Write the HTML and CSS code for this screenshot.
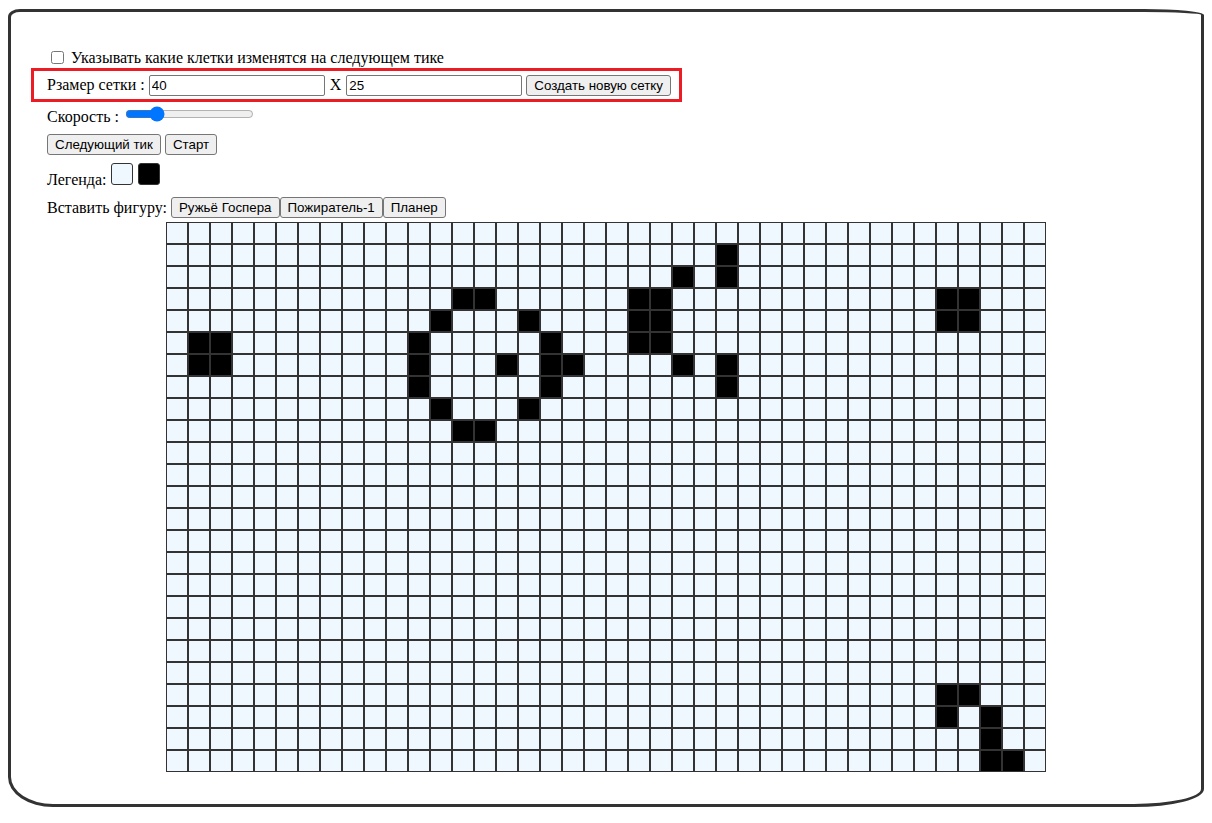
FILE: index.html
```html
<!DOCTYPE html>
<html lang="ru">
<head>
<meta charset="utf-8">
<title>Жизнь</title>
<link rel="stylesheet" href="styles.css">
</head>
<body>
<div class="board">
  <label class="row row-check">
    <input type="checkbox" class="check">
    <span>Указывать какие клетки изменятся на следующем тике</span>
  </label>
  <div class="row size-box">
    <span>Рзамер сетки :</span>
    <input type="text" class="num" value="40">
    <span class="times">X</span>
    <input type="text" class="num" value="25">
    <button class="btn">Создать новую сетку</button>
  </div>
  <div class="row row-speed">
    <span>Скорость :</span>
    <input type="range" class="speed" min="100" max="2000" value="500">
  </div>
  <div class="row row-buttons">
    <button class="btn">Следующий тик</button>
    <button class="btn">Старт</button>
  </div>
  <div class="row row-legend">
    <span class="legend-label">Легенда:</span>
    <span class="swatch"></span>
    <span class="swatch swatch-on"></span>
  </div>
  <div class="row row-insert">
    <span>Вставить фигуру:</span>
    <span class="figs">
      <button class="btn">Ружьё Госпера</button><button class="btn">Пожиратель-1</button><button class="btn">Планер</button>
    </span>
  </div>
  <table class="grid" id="grid"><tbody></tbody></table>
</div>
<script src="script.js"></script>
</body>
</html>
```
FILE: styles.css
```css
html {
  margin: 0;
  padding: 0;
}
body {
  margin: 8px;
  font-family: "Liberation Serif", "Times New Roman", serif;
  font-size: 16px;
  color: #000;
  background: #fff;
}
.board {
  margin-top: 1px;
  height: 798px;
  box-sizing: border-box;
  border: 3px solid #333;
  border-radius: 12px 60px 70px 45px / 8px 6px 18px 30px;
  padding: 36px 36px 0;
}
.row {
  display: flex;
  align-items: center;
  gap: 4px;
}
.row-check {
  height: 18px;
  gap: 0;
  padding-top: 1px;
}
.check {
  width: 13px;
  height: 13px;
  margin: 2px 7px 3px 4px;
}
.size-box {
  margin: 1px 0 0 -16px;
  width: 651px;
  height: 34px;
  box-sizing: border-box;
  border: 3px solid #ec1c24;
  padding: 0 8px 0 13px;
}
.times {
  margin: 0 1px;
}
.num {
  width: 176px;
  height: 21px;
  box-sizing: border-box;
  margin: 0;
  padding: 1px 2px;
  border: 1px solid #767676;
  border-radius: 2px;
  background: #fff;
  font: 13.333px "Liberation Sans", Arial, sans-serif;
  color: #000;
}
.btn {
  height: 21px;
  box-sizing: border-box;
  margin: 0;
  padding: 1px 7px;
  border: 1px solid #767676;
  border-radius: 3px;
  background: #efefef;
  font: 13.333px "Liberation Sans", Arial, sans-serif;
  color: #000;
}
.row-speed {
  margin-top: 5px;
  height: 18px;
}
.row-speed > span {
  margin-top: 2px;
}
.speed {
  width: 129px;
  height: 16px;
  margin: -1px 0 0 2px;
  align-self: flex-start;
}
.row-buttons {
  margin-top: 9px;
  height: 21px;
}
.row-legend {
  margin-top: 8px;
  height: 22px;
  align-items: flex-end;
}
.legend-label {
  margin-bottom: -4px;
}
.swatch {
  width: 20px;
  height: 20px;
  border: 1px solid #333;
  border-radius: 3px;
  background: #f0f8ff;
}
.swatch-on {
  margin-left: 1px;
  background: #000;
}
.row-insert {
  margin-top: 12px;
  height: 21px;
  gap: 4px;
}
.figs {
  display: flex;
}
.grid {
  margin: 4px auto 0;
  border-collapse: separate;
  border-spacing: 0;
}
.grid td {
  width: 20px;
  height: 20px;
  padding: 0;
  border: 1px solid #333;
  background: #f0f8ff;
}
.grid td.on {
  background: #000;
}
```
FILE: script.js
```js
(function () {
  var W = 40, H = 25;
  var alive = [
    [5,1],[5,2],[6,1],[6,2],
    [3,13],[3,14],[4,12],[4,16],[5,11],[5,17],[6,11],[6,15],[6,17],[6,18],
    [7,11],[7,17],[8,12],[8,16],[9,13],[9,14],
    [1,25],[2,23],[2,25],[3,21],[3,22],[4,21],[4,22],[5,21],[5,22],
    [6,23],[6,25],[7,25],
    [3,35],[3,36],[4,35],[4,36],
    [21,35],[21,36],[22,35],[22,37],[23,37],[24,37],[24,38]
  ];
  var set = {};
  alive.forEach(function (p) { set[p[0] + "," + p[1]] = true; });
  var tbody = document.querySelector("#grid tbody");
  for (var r = 0; r < H; r++) {
    var tr = document.createElement("tr");
    for (var c = 0; c < W; c++) {
      var td = document.createElement("td");
      if (set[r + "," + c]) td.className = "on";
      tr.appendChild(td);
    }
    tbody.appendChild(tr);
  }
})();
```
